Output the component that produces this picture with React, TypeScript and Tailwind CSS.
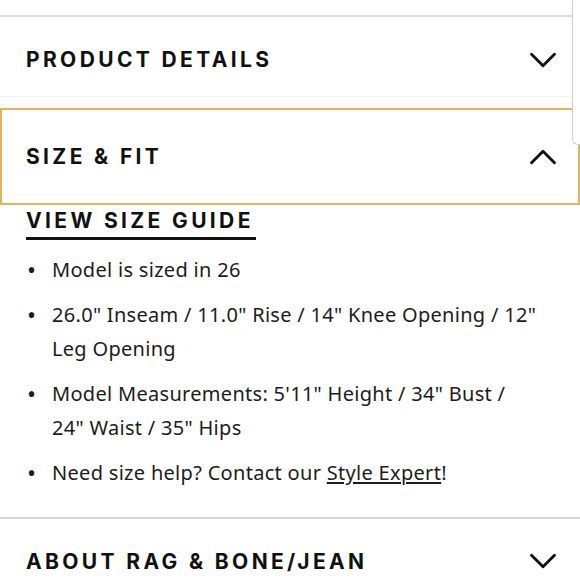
import { ChevronDown, ChevronUp } from "lucide-react"

const heading = "font-['Inter',sans-serif] font-bold uppercase tracking-[0.16em] text-[21px] leading-none text-[#111]"

function Chevron({ up }: { up?: boolean }) {
  const Icon = up ? ChevronUp : ChevronDown
  return <Icon className="h-[46px] w-[46px] text-[#111]" strokeWidth={1.5} />
}

const items = [
  "Model is sized in 26",
  "26.0\" Inseam / 11.0\" Rise / 14\" Knee Opening / 12\" Leg Opening",
  "Model Measurements: 5'11\" Height / 34\" Bust / 24\" Waist / 35\" Hips",
]

function Bullet() {
  return <span className="w-[26px] shrink-0 pl-[1px] text-[24px]">•</span>
}

export default function App() {
  return (
    <div className="relative h-[580px] w-[580px] overflow-hidden bg-white">
      {/* scroll overlay at the top right */}
      <div className="absolute -top-4 right-0 h-[161px] w-[8px] rounded-bl-[6px] border-b border-l border-[#cfcfcf] bg-white" />

      <div className="h-[15px]" />
      <div className="mr-[8px] h-[2px] bg-[#dcdcdc]" />

      <div className="flex h-[80px] items-center justify-between border-b border-[#f2f2f2] pl-[26px] pr-[14px] pt-[6px]">
        <span className={heading}>Product Details</span>
        <Chevron />
      </div>

      <div className="mt-[11px] flex h-[97px] items-center justify-between border-2 border-[#dcb65a] pl-[24px] pr-[12px]">
        <span className={heading}>Size &amp; Fit</span>
        <Chevron up />
      </div>

      <div className="pl-[26px] pr-[30px] pt-[1px] font-['Noto_Sans',sans-serif] text-[20px] tracking-[0.015em] text-[#1c1c1c]">
        <a className={`${heading} inline-block border-b-[3px] border-[#111] pb-[6px] pr-[2px]`}>View Size Guide</a>
        <ul className="mt-[13px] flex w-[512px] flex-col gap-[11px]">
          {items.map((t) => (
            <li key={t} className="flex leading-[34px]">
              <Bullet />
              <span>{t}</span>
            </li>
          ))}
          <li className="flex leading-[34px]">
            <Bullet />
            <span>
              Need size help? Contact our <a className="underline underline-offset-2">Style Expert</a>!
            </span>
          </li>
        </ul>
      </div>

      <div className="mt-[27px] h-[2px] bg-[#d6d6d6]" />
      <div className="flex h-[80px] items-center justify-between pl-[26px] pr-[14px] pt-[4px]">
        <span className={heading}>About Rag &amp; Bone/Jean</span>
        <Chevron />
      </div>
    </div>
  )
}
